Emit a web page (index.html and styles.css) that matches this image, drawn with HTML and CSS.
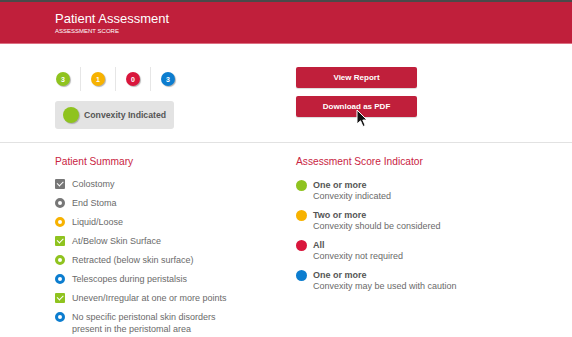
FILE: index.html
```html
<!DOCTYPE html>
<html lang="en">
<head>
  <meta charset="UTF-8"/>
  <title>Patient Assessment</title>
  <link rel="stylesheet" href="styles.css">
</head>
<body>

  <!-- Header -->
  <header class="header">
    <h1 class="title">Patient Assessment</h1>
    <div class="subtitle">ASSESSMENT SCORE</div>
  </header>

  <!-- Score + actions -->
  <section class="top">
    <div class="score-col">
      <div class="badges">
        <div class="badge-item"><span class="badge green">3</span></div>
        <div class="badge-item"><span class="badge orange">1</span></div>
        <div class="badge-item"><span class="badge red">0</span></div>
        <div class="badge-item"><span class="badge blue">3</span></div>
      </div>
      <div class="result">
        <span class="result-dot"></span>
        <span class="result-text">Convexity Indicated</span>
      </div>
    </div>
    <div class="actions">
      <button class="btn">View Report</button>
      <button class="btn">Download as PDF</button>
    </div>
  </section>

  <!-- Summary + legend -->
  <section class="bottom">
    <div>
      <h2 class="heading">Patient Summary</h2>
      <ul class="summary">
        <li><span class="ico check grey"></span>Colostomy</li>
        <li><span class="ico ring grey"></span>End Stoma</li>
        <li><span class="ico ring orange"></span>Liquid/Loose</li>
        <li><span class="ico check green"></span>At/Below Skin Surface</li>
        <li><span class="ico ring green"></span>Retracted (below skin surface)</li>
        <li><span class="ico ring blue"></span>Telescopes during peristalsis</li>
        <li><span class="ico check green"></span>Uneven/Irregular at one or more points</li>
        <li><span class="ico ring blue"></span>No specific peristonal skin disorders<br>present in the peristomal area</li>
      </ul>
    </div>
    <div>
      <h2 class="heading">Assessment Score Indicator</h2>
      <ul class="legend">
        <li><span class="dot green"></span><div><b>One or more</b><br>Convexity indicated</div></li>
        <li><span class="dot orange"></span><div><b>Two or more</b><br>Convexity should be considered</div></li>
        <li><span class="dot red"></span><div><b>All</b><br>Convexity not required</div></li>
        <li><span class="dot blue"></span><div><b>One or more</b><br>Convexity may be used with caution</div></li>
      </ul>
    </div>
  </section>

  <!-- mouse pointer -->
  <svg class="cursor" width="13" height="19" viewBox="0 0 13 19">
    <path d="M1 1 L1 15 L4.5 11.8 L7 17.5 L9.2 16.5 L6.8 11 L11 11 Z" fill="#111" stroke="#fff" stroke-width="1"/>
  </svg>

</body>
</html>
```

FILE: styles.css
```css
:root {
  --brand: #c01f3b;
  --heading: #c9243f;
  --green: #8fc31f;
  --orange: #f7b200;
  --red: #d9163c;
  --blue: #0c7dcf;
  --grey: #777;
  --text: #6a6a6a;
  --font: "Liberation Sans", Arial, sans-serif;
}
* { margin:0; padding:0; box-sizing:border-box }
html, body { width:100%; height:100%; overflow:hidden }
body {
  font-family: var(--font);
  color: var(--text);
  background:#fff;
  position:relative;
}

/* Header */
.header {
  background: var(--brand);
  border-top:2px solid #4a4a4a;
  border-bottom:1px solid #dc6f82;
  padding:9px 55px 8px;
  color:#fff;
}
.title {
  font-size:13px;
  font-weight:normal;
  line-height:15px;
}
.subtitle {
  font-size:6px;
  line-height:8px;
  margin-top:1px;
}

/* Top section */
.top {
  display:grid;
  grid-template-columns:241px 1fr;
  padding:23px 55px 13px;
  border-bottom:1px solid #e2e2e2;
}
.badges { display:flex; height:24px; margin-left:1px }
.badge-item {
  display:flex; align-items:center;
  padding:0 10px;
  border-left:1px solid #e6e6e6;
}
.badge-item:first-child { padding-left:0; border-left:none }
.badge {
  width:14px; height:14px; border-radius:50%;
  display:flex; align-items:center; justify-content:center;
  color:#fff; font-size:7px; font-weight:bold;
  box-shadow:1px 1px 1px rgba(0,0,0,0.3);
}
.badge.green  { background: var(--green) }
.badge.orange { background: var(--orange) }
.badge.red    { background: var(--red) }
.badge.blue   { background: var(--blue) }

.result {
  display:inline-flex; align-items:center; gap:5px;
  width:119px; height:28px;
  margin-top:10px;
  padding-left:8px;
  background:#e3e3e3;
  border-radius:3px;
}
.result-dot {
  width:16px; height:16px; border-radius:50%;
  background: var(--green);
  box-shadow:1px 1px 1px rgba(0,0,0,0.25);
}
.result-text { font-size:8.7px; font-weight:bold; color:#555 }

.actions { display:flex; flex-direction:column; gap:8px }
.btn {
  width:121px; height:21px;
  background: var(--brand);
  color:#fff;
  border:none; border-radius:2px;
  font-family: var(--font);
  font-size:8px; font-weight:bold;
  box-shadow:0 1px 1px rgba(0,0,0,0.15);
}

/* Bottom section */
.bottom {
  display:grid;
  grid-template-columns:241px 1fr;
  padding:13px 55px 0;
}
.heading {
  font-size:10.2px;
  font-weight:normal;
  line-height:12px;
  color: var(--heading);
}
ul { list-style:none }
.summary {
  margin-top:10px;
  display:flex; flex-direction:column; gap:7px;
  font-size:9px; line-height:12px;
}
.summary li { display:flex; align-items:flex-start; gap:7px }
.ico { width:10px; height:10px; margin-top:1px; flex-shrink:0 }
.ico.check {
  border-radius:1px;
  display:flex; align-items:center; justify-content:center;
}
.ico.check::after {
  content:"";
  width:5px; height:2.5px;
  border-left:1.5px solid #fff;
  border-bottom:1.5px solid #fff;
  transform: translateY(-1px) rotate(-45deg);
}
.ico.check.grey  { background: var(--grey) }
.ico.check.green { background: var(--green) }
.ico.ring { border-radius:50%; border:3px solid }
.ico.ring.grey   { border-color: var(--grey) }
.ico.ring.orange { border-color: var(--orange) }
.ico.ring.green  { border-color: var(--green) }
.ico.ring.blue   { border-color: var(--blue) }

.legend {
  margin-top:12px;
  display:flex; flex-direction:column; gap:8px;
  font-size:9px; line-height:11px;
}
.legend li { display:flex; align-items:flex-start; gap:6px }
.legend b { color:#555 }
.dot { width:11px; height:11px; border-radius:50%; flex-shrink:0 }
.dot.green  { background: var(--green) }
.dot.orange { background: var(--orange) }
.dot.red    { background: var(--red) }
.dot.blue   { background: var(--blue) }

/* Pointer over the PDF button */
.cursor { position:absolute; left:356px; top:109px }
```
